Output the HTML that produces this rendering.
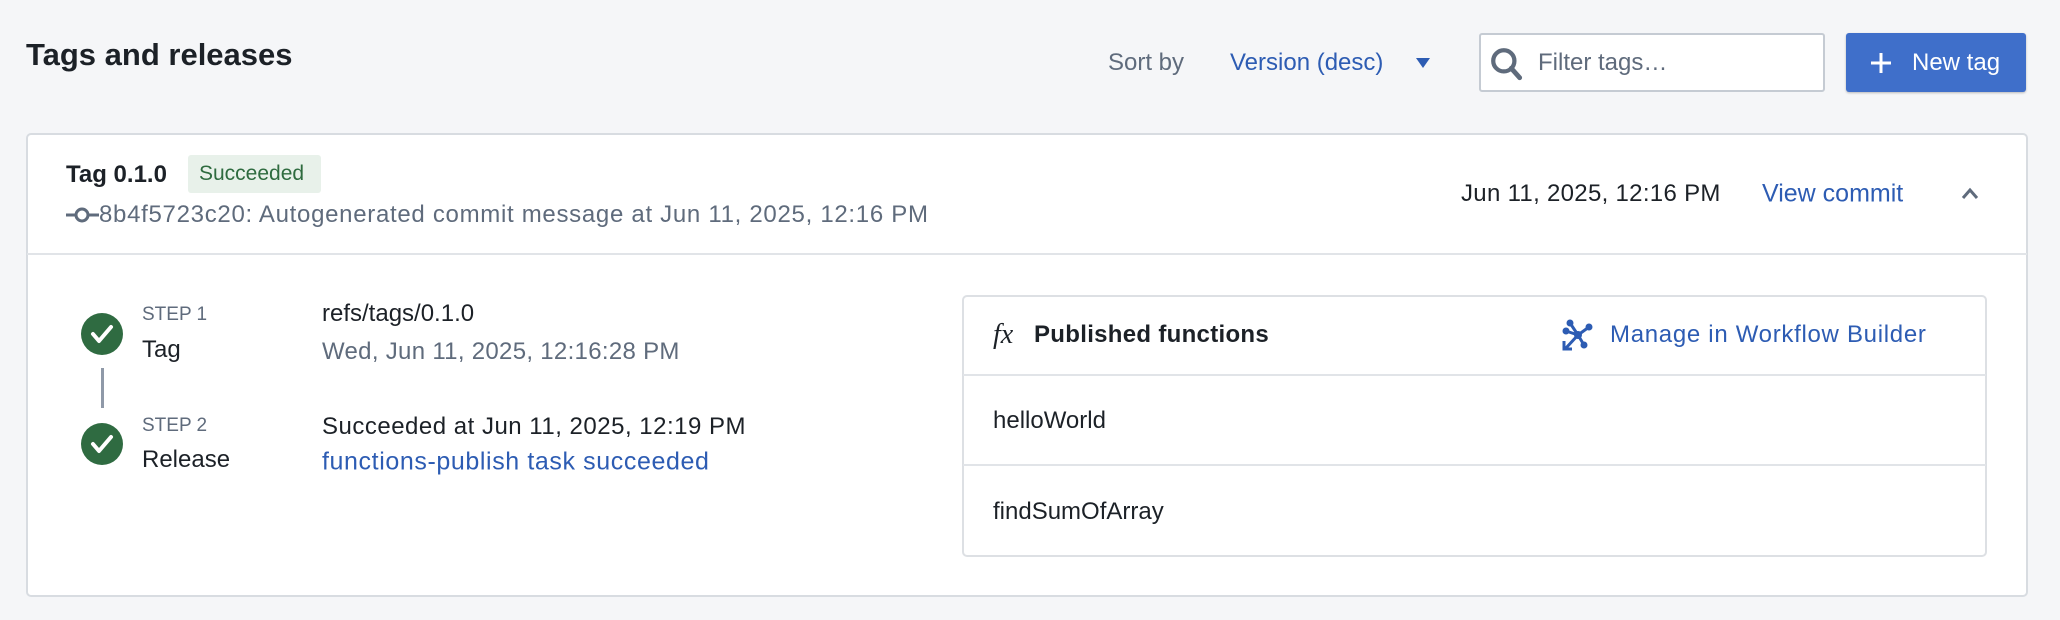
<!DOCTYPE html>
<html><head><meta charset="utf-8"><style>
*{box-sizing:border-box;margin:0;padding:0}
body{width:2060px;height:620px;background:#f5f6f8;font-family:"Liberation Sans",sans-serif;color:#1c2127;position:relative;overflow:hidden}
.a{position:absolute;white-space:nowrap}
.c{transform:translateY(-50%)}
.blue{color:#2d5cb3}
.gray{color:#5f6b7c}
</style></head><body>
<div class="a c" style="left:26px;top:55px;font-size:31px;font-weight:bold">Tags and releases</div>
<div class="a c gray" style="left:1108px;top:63px;font-size:24px">Sort by</div>
<div class="a c blue" style="left:1230px;top:63px;font-size:24px">Version (desc)</div>
<svg class="a" style="left:1415px;top:57px" width="16" height="12"><path d="M1 1h14l-7 10z" fill="#2d5cb3"/></svg>
<div class="a" style="left:1479px;top:33px;width:346px;height:59px;background:#fff;border:2px solid #c5cbd3;border-radius:3px"></div>
<svg class="a" style="left:1489px;top:46px" width="36" height="36" viewBox="0 0 34 34"><circle cx="14" cy="14" r="10" fill="none" stroke="#5f6b7c" stroke-width="4"/><path d="M21 21l8 9" stroke="#5f6b7c" stroke-width="4.5" stroke-linecap="round"/></svg>
<div class="a c" style="left:1538px;top:63px;font-size:24px;color:#5f6b7c">Filter tags…</div>
<div class="a" style="left:1846px;top:33px;width:180px;height:59px;background:#3f6fca;border-radius:3px;box-shadow:0 1px 2px rgba(0,0,0,.25)"></div>
<svg class="a" style="left:1869px;top:51px" width="24" height="24"><path d="M12 2v20M2 12h20" stroke="#fff" stroke-width="3"/></svg>
<div class="a c" style="left:1912px;top:63px;font-size:24px;color:#fff">New tag</div>

<div class="a" style="left:26px;top:133px;width:2002px;height:464px;background:#fff;border:2px solid #d8dce1;border-radius:5px"></div>
<div class="a" style="left:27px;top:253px;width:2000px;height:2px;background:#e1e4e8"></div>
<div class="a c" style="left:66px;top:175px;font-size:24px;font-weight:bold">Tag 0.1.0</div>
<div class="a" style="left:188px;top:155px;width:133px;height:38px;background:#e8f1ea;border-radius:3px"></div>
<div class="a c" style="left:199px;top:174px;font-size:21px;color:#2e6b3f">Succeeded</div>
<svg class="a" style="left:66px;top:206px" width="33" height="18"><path d="M0 9h33" stroke="#5f6b7c" stroke-width="3"/><circle cx="16" cy="9" r="6" fill="#fff" stroke="#5f6b7c" stroke-width="3"/></svg>
<div class="a c gray" style="left:99px;top:215px;font-size:24px;letter-spacing:.7px">8b4f5723c20: Autogenerated commit message at Jun 11, 2025, 12:16 PM</div>
<div class="a c" style="left:1461px;top:194px;font-size:24px;letter-spacing:.3px">Jun 11, 2025, 12:16 PM</div>
<div class="a c blue" style="left:1762px;top:194px;font-size:25px">View commit</div>
<svg class="a" style="left:1960px;top:187px" width="20" height="14"><path d="M3 11l7-8 7 8" fill="none" stroke="#5f6b7c" stroke-width="3"/></svg>

<svg class="a" style="left:81px;top:313px" width="42" height="42"><circle cx="21" cy="21" r="21" fill="#2f6b41"/><path d="M12 21l6 7 12-14" fill="none" stroke="#fff" stroke-width="4" stroke-linecap="round" stroke-linejoin="round"/></svg>
<div class="a" style="left:101px;top:368px;width:3px;height:40px;background:#8f99a8"></div>
<svg class="a" style="left:81px;top:423px" width="42" height="42"><circle cx="21" cy="21" r="21" fill="#2f6b41"/><path d="M12 21l6 7 12-14" fill="none" stroke="#fff" stroke-width="4" stroke-linecap="round" stroke-linejoin="round"/></svg>
<div class="a c gray" style="left:142px;top:315px;font-size:19px">STEP 1</div>
<div class="a c" style="left:142px;top:350px;font-size:24px">Tag</div>
<div class="a c gray" style="left:142px;top:426px;font-size:19px">STEP 2</div>
<div class="a c" style="left:142px;top:460px;font-size:24px">Release</div>
<div class="a c" style="left:322px;top:314px;font-size:24px">refs/tags/0.1.0</div>
<div class="a c gray" style="left:322px;top:352px;font-size:24px;letter-spacing:.3px">Wed, Jun 11, 2025, 12:16:28 PM</div>
<div class="a c" style="left:322px;top:427px;font-size:24px;letter-spacing:.5px">Succeeded at Jun 11, 2025, 12:19 PM</div>
<div class="a c blue" style="left:322px;top:462px;font-size:25px;letter-spacing:.6px">functions-publish task succeeded</div>

<div class="a" style="left:962px;top:295px;width:1025px;height:262px;border:2px solid #dde0e4;border-radius:5px;background:#fff"></div>
<div class="a" style="left:963px;top:374px;width:1023px;height:2px;background:#e1e4e8"></div>
<div class="a" style="left:963px;top:464px;width:1023px;height:2px;background:#e1e4e8"></div>
<div class="a c" style="left:993px;top:335px;font-size:28px;font-style:italic;font-family:'Liberation Serif',serif">fx</div>
<div class="a c" style="left:1034px;top:335px;font-size:24px;font-weight:bold;letter-spacing:.3px">Published functions</div>
<svg class="a" style="left:1562px;top:319px" width="32" height="32" viewBox="0 0 32 32" fill="#2d5cb3" stroke="#2d5cb3"><circle cx="8" cy="4" r="3"/><circle cx="4" cy="12" r="3"/><circle cx="27" cy="8" r="3"/><circle cx="22" cy="26" r="3"/><circle cx="16" cy="16" r="3.5"/><path d="M8 4l8 12M4 12l12 4M27 8l-11 8M22 26l-6-10M16 16L4 29" stroke-width="3" fill="none"/><path d="M2 22v8h8" stroke-width="3" fill="none"/></svg>
<div class="a c blue" style="left:1610px;top:335px;font-size:24px;letter-spacing:.7px">Manage in Workflow Builder</div>
<div class="a c" style="left:993px;top:421px;font-size:24px">helloWorld</div>
<div class="a c" style="left:993px;top:512px;font-size:24px">findSumOfArray</div>
</body></html>
